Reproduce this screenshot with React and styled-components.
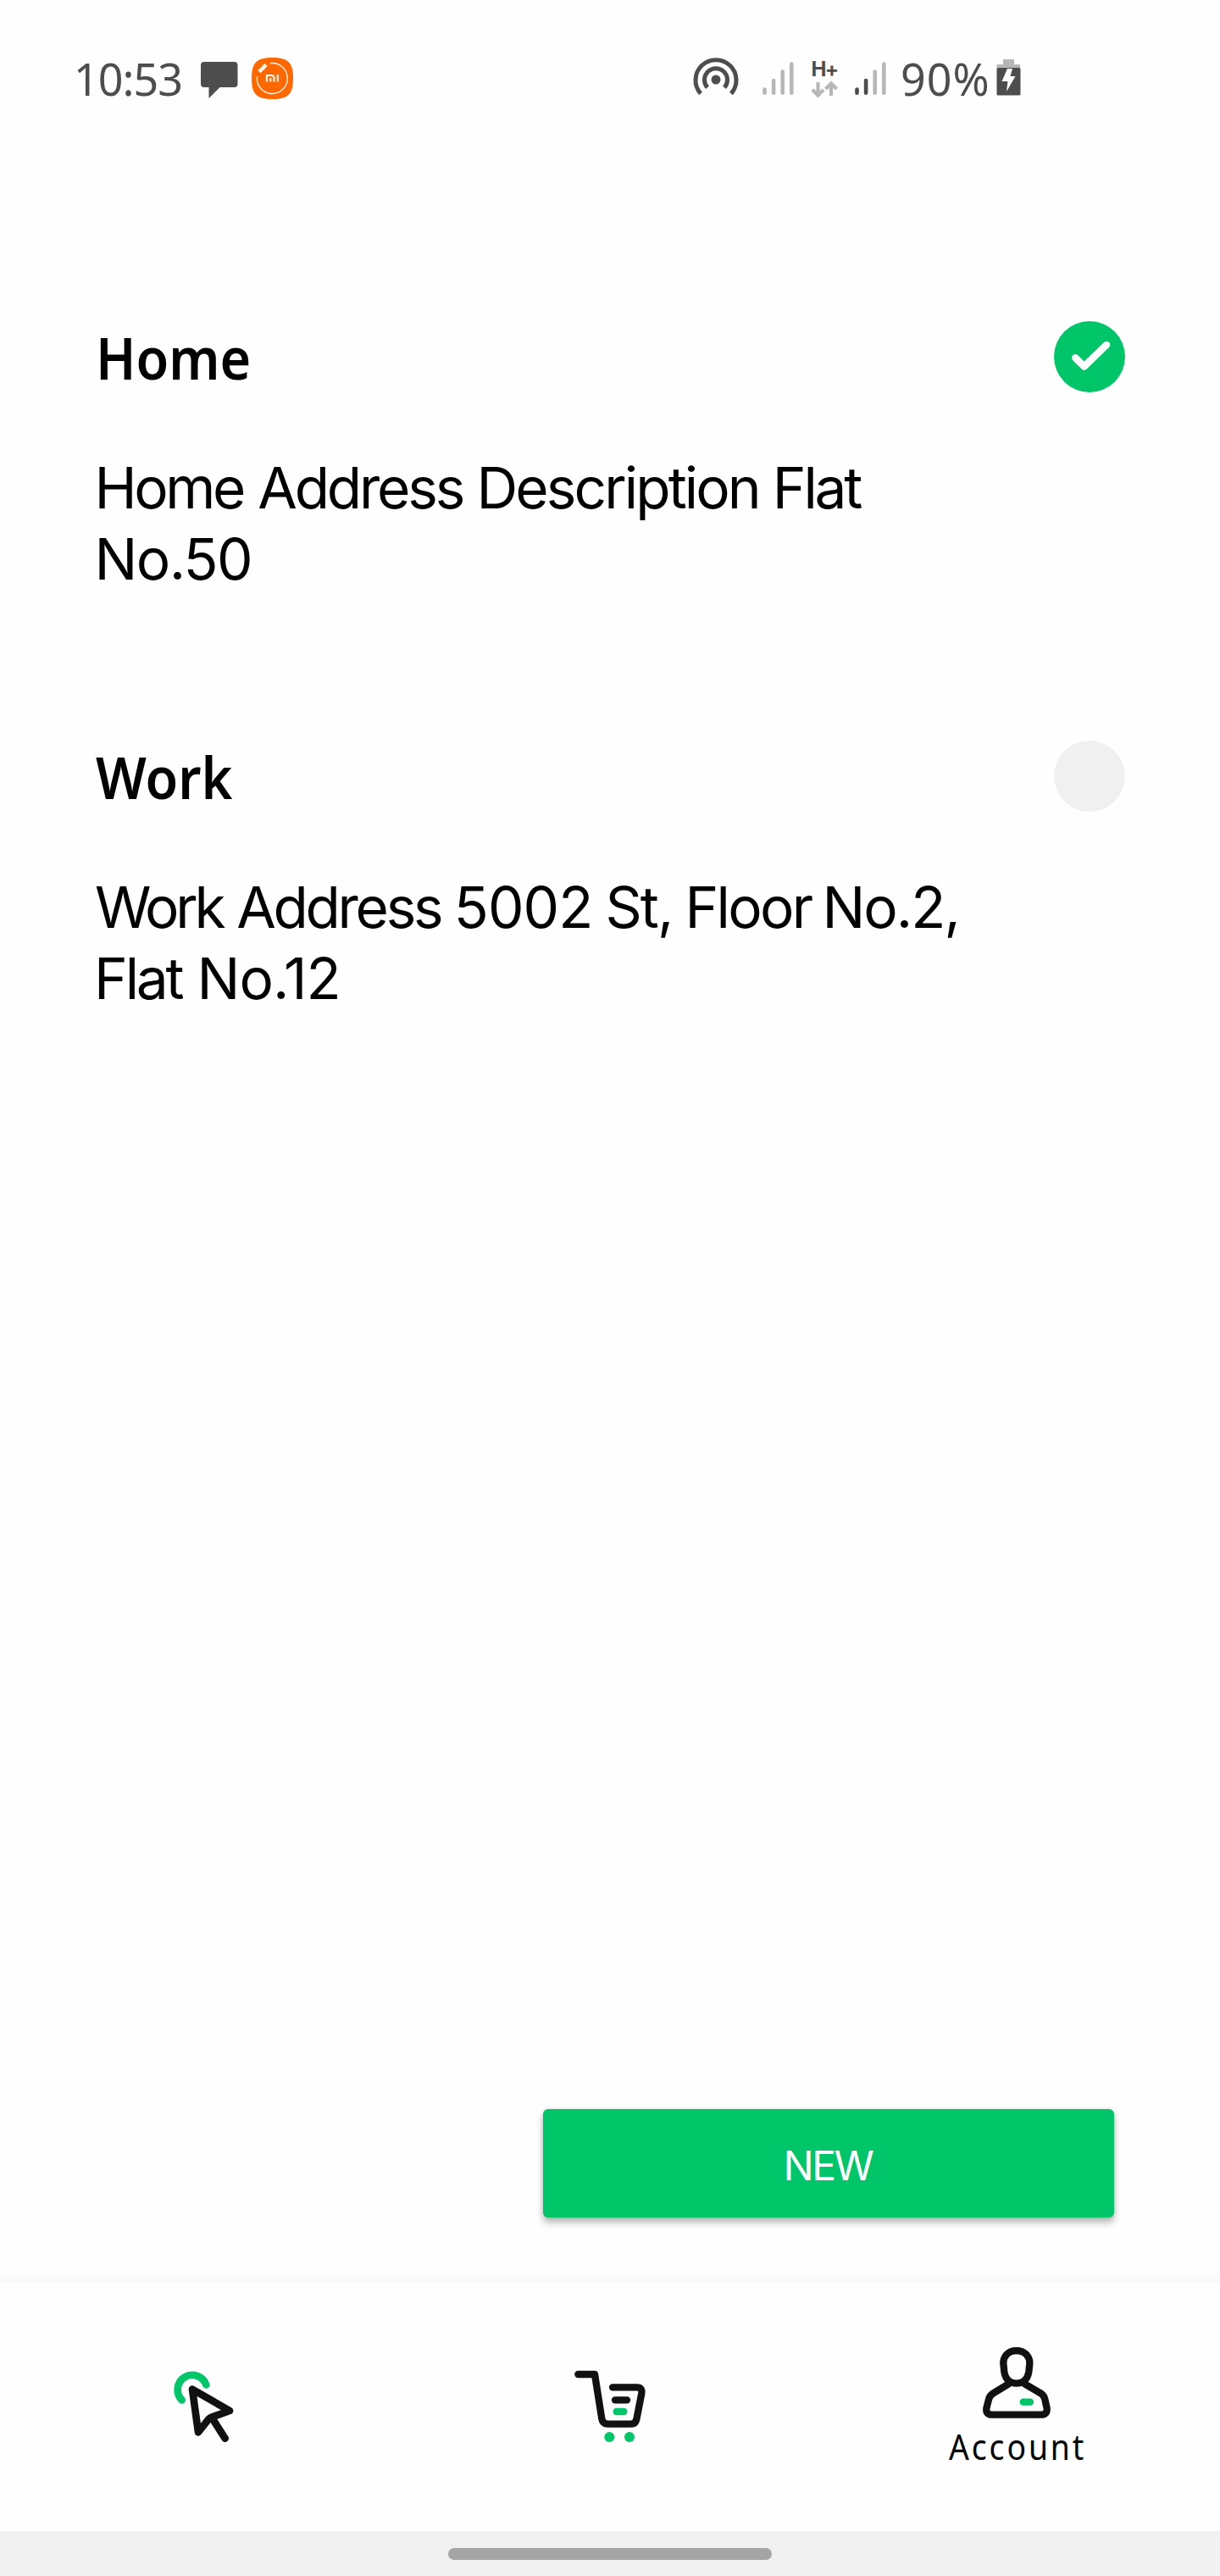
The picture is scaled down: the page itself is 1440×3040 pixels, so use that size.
import React from "react";
import styled, { createGlobalStyle } from "styled-components";

const INK = "#4d4d4d";
const FAINT = "#b7b7b7";
const GREEN = "#00c569";
const BLACK = "#111111";

const GlobalStyle = createGlobalStyle`
  * { box-sizing: border-box; }
  body { margin: 0; background: #fefefe; color: #000; }
  svg { display: block; flex: none; }
`;

const Screen = styled.div`
  width: 1440px;
  height: 3040px;
  display: flex;
  flex-direction: column;
  background: #fefefe;
  overflow: hidden;
`;

const StatusBar = styled.header`
  display: flex;
  height: 140px;
  padding: 50px 235px 0 87px;
  justify-content: space-between;
`;

const StatusGroup = styled.div`
  display: flex;
  align-items: flex-start;
  height: 90px;
`;

const StatusIcon = styled.span`
  margin-right: ${(p) => p.$gap || 0}px;
`;

const StatusText = styled.span`
  font: 370 52px/85px "Noto Sans", sans-serif;
  width: ${(p) => p.$width}px;
  letter-spacing: ${(p) => p.$spacing}px;
  color: ${INK};
  white-space: nowrap;
`;

const NetworkType = styled.div`
  width: 32px;
  height: 90px;
  margin: 0 20px;
  padding-top: 18px;
  display: flex;
  flex-direction: column;
  align-items: center;
`;

const NetworkLabel = styled.span`
  font: 700 24px/27px Inter, sans-serif;
  letter-spacing: -1.5px;
  color: ${INK};
`;

const Content = styled.main`
  flex: 1;
  display: flex;
  flex-direction: column;
  padding: 234px 112px 65px;
`;

const Address = styled.section`
  height: 495px;
  display: flex;
  justify-content: space-between;
  align-items: flex-start;
`;

const AddressTitle = styled.h2`
  margin: 0 0 66px 1px;
  font: 600 69px/94px "Noto Sans", sans-serif;
  transform: scaleX(0.91);
  transform-origin: left;
`;

const AddressLine = styled.span`
  display: block;
  font: 400 67.5px/84px Inter, sans-serif;
  white-space: nowrap;
`;

const Word = styled.span`
  letter-spacing: ${(p) => p.$spacing}px;
  margin-left: ${(p) => p.$shift}px;
`;

const Indicator = styled.span`
  width: 84px;
  height: 84px;
  margin-top: 5px;
  border-radius: 50%;
  background: ${(p) => (p.$on ? GREEN : "#f0f0f0")};
`;

const NewButton = styled.button`
  margin: auto 13px 0 auto;
  width: 674px;
  height: 128px;
  border: 0;
  border-radius: 6px;
  padding: 6px 2px 0 0;
  background: ${GREEN};
  color: #fff;
  font: 380 48px/1 Inter, sans-serif;
  letter-spacing: -2.5px;
  box-shadow: 0 6px 9px rgba(0, 0, 0, 0.27), 0 0 5px rgba(0, 0, 0, 0.1);
`;

const NavShade = styled.div`
  height: 11px;
  background: linear-gradient(#fefefe, #f7f7f7);
`;

const Nav = styled.nav`
  height: 294px;
  display: grid;
  grid-template-columns: repeat(3, 480px);
`;

const NavItem = styled.a`
  display: flex;
  flex-direction: column;
  align-items: center;
  justify-content: center;
`;

const NavLabel = styled.span`
  margin: 5px -3px -4px 0;
  font: 370 41px/56px "Noto Sans", sans-serif;
  letter-spacing: 3.2px;
  transform: scaleX(0.91);
`;

const GestureBar = styled.footer`
  height: 53px;
  padding-top: 20px;
  background: #f1f1f1;
`;

const GestureHandle = styled.div`
  width: 382px;
  height: 14px;
  margin: 0 auto;
  border-radius: 7px;
  background: #a5a5a5;
`;

const MessageIcon = () => (
  <svg width="44" height="90" viewBox="0 0 44 90" fill={INK}>
    <path d="M4 23H39.500Q43.500 23 43.500 27V49Q43.500 53 39.500 53H22.500L9.500 66V53H4Q0 53 0 49V27Q0 23 4 23Z" />
  </svg>
);

const MiIcon = () => (
  <svg width="50" height="90" viewBox="0 0 50 90" fill="none">
    <path d="M24.500 18C43 18 49 24 49 42.500S43 67 24.500 67S0 61 0 42.500S6 18 24.500 18Z" fill="#ff6700" />
    <path d="M22 24.700A18 18 0 1 1 6.500 40" stroke="#fff3e6" strokeWidth="1.400" />
    <path d="M10.500 33L15.500 28" stroke="#fff3e6" strokeWidth="4.500" strokeLinecap="square" />
    <path d="M18 46.500V39H23.500Q26.500 39 26.500 42V46.500M22.300 42V46.500M30.800 38V46.500" stroke="#fff3e6" strokeWidth="2.200" />
  </svg>
);

const HotspotIcon = () => (
  <svg width="54" height="90" viewBox="0 0 54 90" fill="none" stroke={INK} strokeWidth="5">
    <path d="M9 60.500A24 24 0 1 1 45 60.500" />
    <path d="M17 53.300A13.500 13.500 0 1 1 37 53.300" />
    <circle cx="27" cy="44" r="5.500" fill={INK} stroke="none" />
  </svg>
);

const SignalIcon = ({ level }) => (
  <svg width="37" height="90" viewBox="0 0 37 90" strokeWidth="4.600" strokeLinecap="round">
    {[55.5, 45, 34.5, 25.5].map((top, i) => (
      <path key={top} d={`M${2.5 + i * 10.6} ${top}V59.8`} stroke={i < level ? INK : FAINT} />
    ))}
  </svg>
);

const DataArrows = () => (
  <svg width="32" height="22" viewBox="0 0 32 22" fill="none" stroke={FAINT} strokeWidth="4.200">
    <path d="M8.500 2V17M2 11L8.500 17.500L15 11" />
    <path d="M24 18V4M17.500 10L24 3.500L30.500 10" />
  </svg>
);

const BatteryIcon = () => (
  <svg width="29" height="90" viewBox="0 0 29 90">
    <path d="M8 20H21V26H28V31H0.500V26H8Z" fill={FAINT} />
    <rect x="0.500" y="30" width="28" height="32.500" rx="1.500" fill={INK} />
    <path d="M13 31H19L16.500 40H22.500L12 58L13.500 46H6.500Z" fill="#fff" />
  </svg>
);

const CheckMark = () => (
  <svg width="84" height="84" viewBox="0 0 84 84" fill="none" stroke="#fff" strokeWidth="8.500" strokeLinecap="round" strokeLinejoin="round">
    <path d="M25.300 43.300L35.700 53.500L62 28" />
  </svg>
);

const CursorIcon = () => (
  <svg width="120" height="140" viewBox="0 0 360 420" fill="none" strokeWidth="26" strokeLinecap="round" strokeLinejoin="round">
    <path d="M104 187A52 52 0 1 1 190 133" stroke={GREEN} />
    <path d="M141 149L273 225L211 247Q203 250 197 257L162 301Z" stroke={BLACK} />
    <path d="M213 254L257 323" stroke={BLACK} />
  </svg>
);

const CartIcon = () => (
  <svg width="120" height="140" viewBox="0 0 360 420" fill="none" stroke={BLACK} strokeWidth="25" strokeLinecap="round" strokeLinejoin="round">
    <path d="M67 96H126L151 254Q154 272 172 272H255Q270 272 274 255L292 163Q295 142 275 142H189" />
    <path d="M198 187H240" />
    <path d="M203 228H229" stroke={GREEN} />
    <circle cx="178" cy="318" r="18" fill={GREEN} stroke="none" />
    <circle cx="249" cy="318" r="18" fill={GREEN} stroke="none" />
  </svg>
);

const AccountIcon = () => (
  <svg width="84" height="84" viewBox="174 60 252 252" fill="none" stroke={BLACK} strokeWidth="25" strokeLinecap="round" strokeLinejoin="round">
    <path d="M299 72C328 72 347 92 346 118L343 147C339 174 322 188 299 188S260 174 256 147L253 118C252 92 271 72 299 72Z" />
    <path d="M270 191L217 223Q204 231 201 245L193 276Q190 299 213 299H387Q409 299 407 276L400 244Q397 231 385 223L330 191" />
    <path d="M323 254H348" stroke={GREEN} />
  </svg>
);

// Each word carries its own tracking and optical shift.
const ADDRESSES = [
  {
    title: "Home",
    selected: true,
    lines: [
      [["Home", -3.4, -0.5], ["Address", -3.2, -1.7], ["Description", -2.9, -2.5], ["Flat", -3.2, -3]],
      [["No.50", -1.6, -0.5]],
    ],
  },
  {
    title: "Work",
    selected: false,
    lines: [
      [["Work", -4.2, 0], ["Address", -3.3, -2], ["5002", -0.9, -3.5], ["St,", -2, -4], ["Floor", -2.7, -4], ["No.2,", -2, -6]],
      [["Flat", -3.2, -1], ["No.12", -0.8, -1]],
    ],
  },
];

export default function App() {
  return (
    <Screen>
      <GlobalStyle />
      <StatusBar>
        <StatusGroup>
          <StatusText $width={150} $spacing={-1}>10:53</StatusText>
          <StatusIcon $gap={16}><MessageIcon /></StatusIcon>
          <MiIcon />
        </StatusGroup>
        <StatusGroup>
          <StatusIcon $gap={28}><HotspotIcon /></StatusIcon>
          <SignalIcon level={0} />
          <NetworkType>
            <NetworkLabel>H+</NetworkLabel>
            <DataArrows />
          </NetworkType>
          <StatusIcon $gap={17}><SignalIcon level={2} /></StatusIcon>
          <StatusText $width={113} $spacing={1}>90%</StatusText>
          <BatteryIcon />
        </StatusGroup>
      </StatusBar>
      <Content>
        {ADDRESSES.map((a) => (
          <Address key={a.title}>
            <div>
              <AddressTitle>{a.title}</AddressTitle>
              {a.lines.map((words, row) => (
                <AddressLine key={row}>
                  {words.map(([text, spacing, shift], i) => (
                    <React.Fragment key={i}>
                      {i > 0 && " "}
                      <Word $spacing={spacing} $shift={shift}>{text}</Word>
                    </React.Fragment>
                  ))}
                </AddressLine>
              ))}
            </div>
            <Indicator $on={a.selected}>{a.selected && <CheckMark />}</Indicator>
          </Address>
        ))}
        <NewButton>NEW</NewButton>
      </Content>
      <NavShade />
      <Nav>
        <NavItem><CursorIcon /></NavItem>
        <NavItem><CartIcon /></NavItem>
        <NavItem>
          <AccountIcon />
          <NavLabel>Account</NavLabel>
        </NavItem>
      </Nav>
      <GestureBar>
        <GestureHandle />
      </GestureBar>
    </Screen>
  );
}
